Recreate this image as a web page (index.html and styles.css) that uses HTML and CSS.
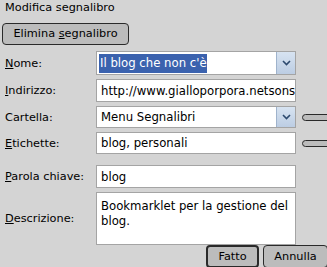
FILE: index.html
```html
<!DOCTYPE html>
<html>
<head>
<meta charset="utf-8">
<link rel="stylesheet" href="styles.css">
</head>
<body>
<div class="page">
  <div class="title">Modifica segnalibro</div>
  <div class="btn elimina"><span>Elimina <u>s</u>egnalibro</span></div>
  <div class="form">
    <div class="label"><span><u>N</u>ome:</span></div>
    <div class="field select"><span class="sel">Il blog che non c'è</span><span class="drop"><svg width="9" height="6" viewBox="0 0 9 6"><path d="M1 1 L4.5 4.5 L8 1" fill="none" stroke="#2d4a6e" stroke-width="1.6"/></svg></span></div>
    <div class="side"></div>

    <div class="label"><span><u>I</u>ndirizzo:</span></div>
    <div class="field"><span class="clip">http://www.gialloporpora.netsons.org/</span></div>
    <div class="side"></div>

    <div class="label"><span>Cartella:</span></div>
    <div class="field select"><span>Menu Segnalibri</span><span class="drop"><svg width="9" height="6" viewBox="0 0 9 6"><path d="M1 1 L4.5 4.5 L8 1" fill="none" stroke="#2d4a6e" stroke-width="1.6"/></svg></span></div>
    <div class="side"><span class="pill"></span></div>

    <div class="label"><span><u>E</u>tichette:</span></div>
    <div class="field"><span>blog, personali</span></div>
    <div class="side"><span class="pill"></span></div>

    <div class="label spaced"><span><u>P</u>arola chiave:</span></div>
    <div class="field spaced"><span>blog</span></div>
    <div class="side spaced"></div>

    <div class="label"><span><u>D</u>escrizione:</span></div>
    <div class="field area">Bookmarklet per la gestione del blog.</div>
    <div class="side"></div>
  </div>
  <div class="actions">
    <div class="btn fatto"><span>Fatto</span></div>
    <div class="btn annulla"><span>Annulla</span></div>
  </div>
</div>
</body>
</html>
```

FILE: styles.css
```css
html, body {
  margin: 0;
  padding: 0;
}
body {
  background: #d4d4d4;
  font-family: "DejaVu Sans", sans-serif;
  font-size: 11.3px;
  color: #000;
  width: 327px;
  height: 267px;
  overflow: hidden;
}
.page {
  display: flex;
  flex-direction: column;
}
.title {
  padding: 1px 0 0 5px;
  height: 22px;
  line-height: 14px;
}
.btn {
  box-sizing: border-box;
  border: 1px solid #2a2a2a;
  border-radius: 4px;
  background: #bcbcbc;
  display: flex;
  align-items: center;
  justify-content: center;
  line-height: 14px;
  white-space: nowrap;
}
u {
  text-decoration: underline;
  text-underline-offset: 1px;
}
.elimina {
  margin-left: 2px;
  width: 127px;
  height: 22px;
}
.form {
  margin-top: 6px;
  display: grid;
  grid-template-columns: 91px 200px 1fr;
  grid-template-rows: 24px 23px 22px 22px 30px 53px;
  row-gap: 4px;
  margin-left: 5px;
}
.label {
  display: flex;
  align-items: center;
}
.spaced {
  margin-top: 7px;
}
.field {
  box-sizing: border-box;
  background: #fff;
  border: 1px solid #a4a4a4;
  display: flex;
  align-items: center;
  padding-left: 4px;
  overflow: hidden;
  white-space: nowrap;
  font-size: 11.7px;
}
.field.select {
  padding-right: 0;
  justify-content: space-between;
}
.sel {
  background: #3b62ae;
  color: #fff;
  padding: 2px 0 3px 1px;
  margin-left: -2px;
}
.clip {
  overflow: hidden;
}
.drop {
  box-sizing: border-box;
  width: 19px;
  align-self: stretch;
  border-left: 1px solid #9fb3cc;
  background: linear-gradient(#d7e3f1, #bccde3);
  display: flex;
  align-items: center;
  justify-content: center;
  flex: none;
}
.area {
  align-items: flex-start;
  white-space: normal;
  padding: 6px 4px 0 4px;
  line-height: 15px;
}
.side {
  display: flex;
  align-items: center;
  padding-left: 6px;
}
.pill {
  box-sizing: border-box;
  width: 30px;
  height: 7px;
  border: 1px solid #2a2a2a;
  border-radius: 4px;
  background: #bcbcbc;
}
.actions {
  display: flex;
  justify-content: flex-end;
  gap: 4px;
  margin-right: -1px;
}
.fatto {
  width: 53px;
  height: 23px;
  border-width: 2px;
}
.annulla {
  width: 65px;
  height: 23px;
}
```
